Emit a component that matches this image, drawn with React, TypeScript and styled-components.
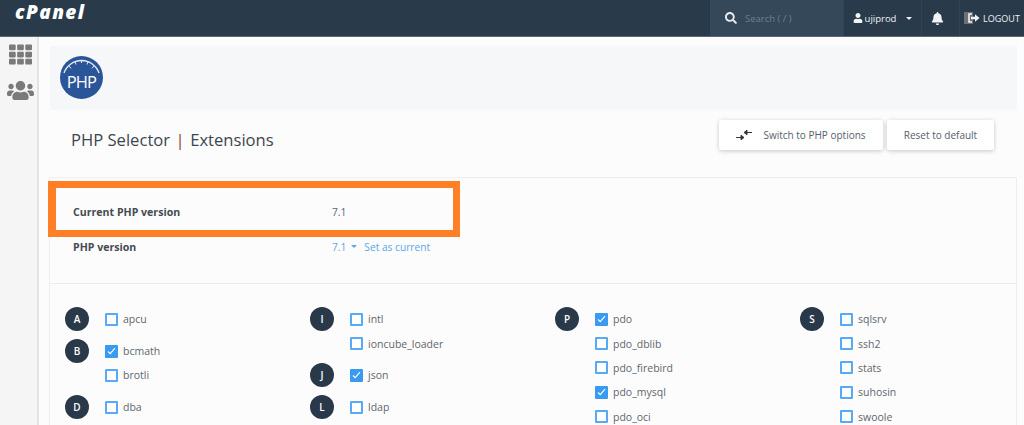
import styled, { createGlobalStyle } from 'styled-components';
import { FaBell, FaSearch, FaTh, FaUser, FaUsers } from 'react-icons/fa';

const GlobalStyle = createGlobalStyle`
  html, body {
    margin: 0;
    height: 425px;
    overflow: hidden;
    background: #fcfcfc;
    font-family: "Open Sans", sans-serif;
  }
`;

const Header = styled.header`
  display: flex;
  align-items: stretch;
  height: 36px;
  background: #293a4b;
  border-bottom: 1px solid #5b6771;
  box-sizing: content-box;
`;

const Logo = styled.div`
  flex: 1;
  padding-left: 15px;
  font-family: "Open Sans", sans-serif;
  font-style: italic;
  font-weight: 800;
  font-size: 19px;
  line-height: 25px;
  letter-spacing: 1.4px;
  color: #fff;
`;

const SearchBox = styled.div`
  display: flex;
  align-items: center;
  width: 133px;
  padding-left: 15px;
  box-sizing: border-box;
  background: #35485a;
  color: #6f7e8b;
  font-size: 9.5px;
  svg {
    color: #e8ebee;
    font-size: 12px;
    margin-right: 8px;
  }
`;

const HeaderCell = styled.div<{ $width: number }>`
  display: flex;
  align-items: center;
  justify-content: center;
  width: ${(p) => p.$width}px;
  border-left: 1px solid #32444f;
  box-sizing: border-box;
  color: #f1f3f5;
  font-size: 9.5px;
  gap: 2px;
`;

const BellCell = styled(HeaderCell)`
  padding-right: 6px;
`;

const LogoutCell = styled(HeaderCell)`
  font-size: 9px;
`;

const Caret = styled.span<{ $color: string }>`
  display: inline-block;
  width: 0;
  height: 0;
  border-left: 3px solid transparent;
  border-right: 3px solid transparent;
  border-top: 3px solid ${(p) => p.$color};
`;

const UserCaret = styled(Caret)`
  margin-left: 8px;
`;

const LogoutIcon = styled.svg`
  width: 17px;
  height: 12px;
  flex: none;
`;

const Shell = styled.div`
  display: flex;
  height: 388px;
`;

const Sidebar = styled.nav`
  flex: none;
  width: 34px;
  background: #f5f5f5;
  border-right: 2px solid #e3e3e3;
  display: flex;
  flex-direction: column;
  align-items: center;
  gap: 11px;
  padding: 6px 0 0 3px;
  color: #7a7a7a;
  box-sizing: content-box;
  svg:first-child {
    font-size: 23px;
  }
  svg:last-child {
    font-size: 27px;
  }
`;

const Main = styled.main`
  flex: 1;
  min-width: 0;
`;

const Hero = styled.div`
  height: 64px;
  margin: 9px 7px 0 11px;
  padding: 10px;
  box-sizing: border-box;
  background: #f6f7f9;
`;

const TitleRow = styled.div`
  display: flex;
  align-items: flex-start;
  justify-content: space-between;
  height: 60px;
  padding: 10px 30px 0 32px;
  box-sizing: border-box;
`;

const Title = styled.h1`
  margin: 8px 0 0;
  font-size: 16.6px;
  line-height: 24px;
  font-weight: 400;
  color: #3d4650;
`;

const TitleBar = styled.span`
  color: #8d3f3a;
  margin: 0 5.5px;
`;

const Actions = styled.div`
  display: flex;
  gap: 4px;
`;

const ActionButton = styled.button<{ $width: number }>`
  display: flex;
  align-items: center;
  justify-content: center;
  gap: 11px;
  width: ${(p) => p.$width}px;
  height: 30px;
  padding: 0;
  border: 0;
  border-radius: 2px;
  background: #fff;
  box-shadow: 0 1px 4px rgba(0, 0, 0, 0.22);
  color: #55606a;
  font-family: "Open Sans", sans-serif;
  font-size: 10px;
`;

const Panel = styled.section`
  position: relative;
  margin: 7px 7px 0 10px;
  background: #fcfcfc;
  border: 1px solid #eeeeee;
`;

const Highlight = styled.div`
  position: absolute;
  left: -2px;
  top: 3px;
  width: 412px;
  height: 56px;
  box-sizing: border-box;
  border: solid #ff7f27;
  border-width: 7px 7px 7px 8px;
`;

const VersionBlock = styled.div`
  padding: 16px 0 19px 23px;
  border-bottom: 1px solid #eeeeee;
`;

const VersionRow = styled.div`
  display: flex;
  align-items: center;
  height: 35px;
  font-size: 10.2px;
`;

const VersionLabel = styled.div`
  width: 259px;
  font-size: 10.6px;
  font-weight: 700;
  color: #444b52;
`;

const VersionValue = styled.div<{ $link?: boolean }>`
  display: flex;
  align-items: center;
  color: ${(p) => (p.$link ? '#5da4ea' : '#5c6670')};
`;

const VersionCaret = styled(Caret)`
  margin: 0 7px 0 5px;
`;

const Columns = styled.div`
  display: grid;
  grid-template-columns: repeat(4, 245px);
  padding: 23px 0 0 15px;
`;

const Column = styled.div`
  display: flex;
  flex-direction: column;
  gap: 7.5px;
`;

const Group = styled.div`
  display: flex;
  align-items: flex-start;
`;

const Letter = styled.div`
  flex: none;
  width: 24px;
  height: 24px;
  margin-right: 16px;
  border-radius: 50%;
  background: #29394a;
  color: #fff;
  font-size: 10px;
  font-weight: 600;
  line-height: 24px;
  text-align: center;
`;

const Items = styled.div`
  display: flex;
  flex-direction: column;
`;

const Item = styled.label`
  display: flex;
  align-items: center;
  height: 24.4px;
  font-size: 10.5px;
  color: #5f666d;
`;

const Box = styled.span<{ $checked: boolean }>`
  display: flex;
  align-items: center;
  justify-content: center;
  flex: none;
  width: 13px;
  height: 13px;
  margin-right: 5px;
  box-sizing: border-box;
  border: 2px solid ${(p) => (p.$checked ? '#3a99f0' : '#58aaf6')};
  border-radius: 1px;
  background: ${(p) => (p.$checked ? '#3a99f0' : '#fff')};
`;

const PhpBadge = () => (
  <svg width="43" height="43" viewBox="0 0 43 43">
    <circle cx="21.5" cy="21.5" r="21.5" fill="#2a5599" />
    <path d="M4 17 A18.5 18.5 0 0 1 39 17" fill="none" stroke="#e6ecf5" strokeWidth="1.4" />
    <path
      d="M9 10 l2 2.4 M15 5.5 l1 3 M21.5 4 v3 M28 5.5 l-1 3 M34 10 l-2 2.4"
      stroke="#e6ecf5"
      strokeWidth="1"
    />
    <text
      x="21.5"
      y="32"
      textAnchor="middle"
      fill="#fff"
      fontFamily="Open Sans, sans-serif"
      fontSize="16.5"
      letterSpacing="-0.9"
    >
      PHP
    </text>
  </svg>
);

const SwitchIcon = () => (
  <svg width="16" height="10" viewBox="0 0 16 10">
    <path d="M0 7.5h7M5 5.2v4.6L8 7.5z" fill="#33393f" stroke="#33393f" strokeWidth="1" />
    <path d="M16 2.5H9M11 0.2v4.6L8 2.5z" fill="#33393f" stroke="#33393f" strokeWidth="1" />
  </svg>
);

const Check = () => (
  <svg width="9" height="8" viewBox="0 0 9 8">
    <path d="M1 4.5l2.2 2.2L8 1.2" fill="none" stroke="#fff" strokeWidth="1.1" />
  </svg>
);

type Ext = { name: string; on?: boolean };
type ExtGroup = { letter: string; items: Ext[] };

const columns: ExtGroup[][] = [
  [
    { letter: 'A', items: [{ name: 'apcu' }] },
    { letter: 'B', items: [{ name: 'bcmath', on: true }, { name: 'brotli' }] },
    { letter: 'D', items: [{ name: 'dba' }] },
  ],
  [
    { letter: 'I', items: [{ name: 'intl' }, { name: 'ioncube_loader' }] },
    { letter: 'J', items: [{ name: 'json', on: true }] },
    { letter: 'L', items: [{ name: 'ldap' }] },
  ],
  [
    {
      letter: 'P',
      items: [
        { name: 'pdo', on: true },
        { name: 'pdo_dblib' },
        { name: 'pdo_firebird' },
        { name: 'pdo_mysql', on: true },
        { name: 'pdo_oci' },
      ],
    },
  ],
  [
    {
      letter: 'S',
      items: [{ name: 'sqlsrv' }, { name: 'ssh2' }, { name: 'stats' }, { name: 'suhosin' }, { name: 'swoole' }],
    },
  ],
];

const App = () => {
  return (
    <>
      <GlobalStyle />
      <Header>
        <Logo>cPanel</Logo>
        <SearchBox>
          <FaSearch />
          Search ( / )
        </SearchBox>
        <HeaderCell $width={78}>
          <FaUser size={10} />
          ujiprod
          <UserCaret $color="#f1f3f5" />
        </HeaderCell>
        <BellCell $width={38}>
          <FaBell size={13} />
        </BellCell>
        <LogoutCell $width={65}>
          <LogoutIcon viewBox="0 0 17 12">
            <rect x="0" y="0" width="9" height="12" fill="#6c7075" />
            <path d="M8 2H5v8h3" fill="none" stroke="#f1f3f5" strokeWidth="1.6" />
            <path d="M7 4.7h4V2.2L15.5 6 11 9.8V7.3H7z" fill="#f1f3f5" />
          </LogoutIcon>
          LOGOUT
        </LogoutCell>
      </Header>
      <Shell>
        <Sidebar>
          <FaTh />
          <FaUsers />
        </Sidebar>
        <Main>
          <Hero>
            <PhpBadge />
          </Hero>
          <TitleRow>
            <Title>
              PHP Selector<TitleBar>|</TitleBar>Extensions
            </Title>
            <Actions>
              <ActionButton $width={164}>
                <SwitchIcon />
                Switch to PHP options
              </ActionButton>
              <ActionButton $width={107}>Reset to default</ActionButton>
            </Actions>
          </TitleRow>
          <Panel>
            <Highlight />
            <VersionBlock>
              <VersionRow>
                <VersionLabel>Current PHP version</VersionLabel>
                <VersionValue>7.1</VersionValue>
              </VersionRow>
              <VersionRow>
                <VersionLabel>PHP version</VersionLabel>
                <VersionValue $link>
                  7.1
                  <VersionCaret $color="#5da4ea" />
                  Set as current
                </VersionValue>
              </VersionRow>
            </VersionBlock>
            <Columns>
              {columns.map((groups) => (
                <Column key={groups[0].letter}>
                  {groups.map((group) => (
                    <Group key={group.letter}>
                      <Letter>{group.letter}</Letter>
                      <Items>
                        {group.items.map((item) => (
                          <Item key={item.name}>
                            <Box $checked={!!item.on}>{item.on && <Check />}</Box>
                            {item.name}
                          </Item>
                        ))}
                      </Items>
                    </Group>
                  ))}
                </Column>
              ))}
            </Columns>
          </Panel>
        </Main>
      </Shell>
    </>
  );
};

export default App;
